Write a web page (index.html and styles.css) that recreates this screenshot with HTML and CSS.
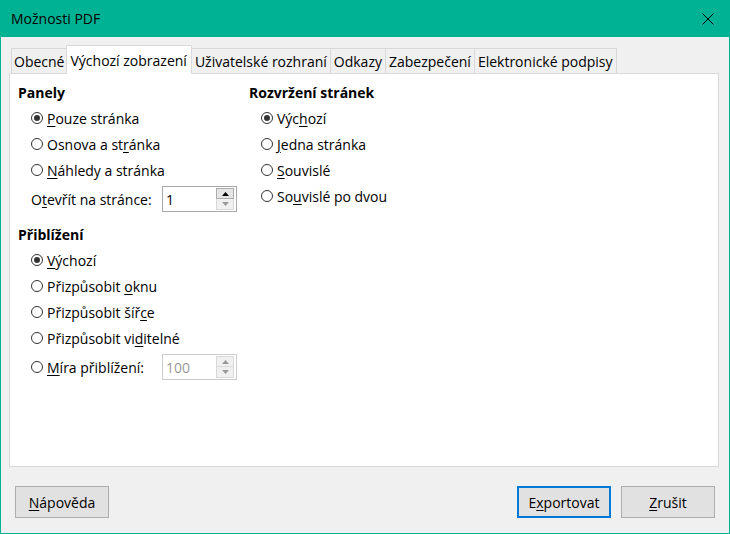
FILE: index.html
```html
<!DOCTYPE html>
<html lang="cs">
<head>
<meta charset="utf-8">
<title>Možnosti PDF</title>
<link rel="stylesheet" href="styles.css">
</head>
<body>
<div class="window">
  <div class="titlebar">
    <span class="title">Možnosti PDF</span>
    <svg class="close" width="12" height="12" viewBox="0 0 12 12"><path d="M0.5 0.5L11.5 11.5M11.5 0.5L0.5 11.5" stroke="#000" stroke-width="1" fill="none"/></svg>
  </div>
  <div class="body">
    <div class="tabs">
      <div class="tab">Obecné</div>
      <div class="tab active">Výchozí zobrazení</div>
      <div class="tab">Uživatelské rozhraní</div>
      <div class="tab">Odkazy</div>
      <div class="tab">Zabezpečení</div>
      <div class="tab last">Elektronické podpisy</div>
    </div>
    <div class="panel">
      <div class="col col-left">
        <div class="heading">Panely</div>
        <div class="radio-row"><span class="radio checked"></span><span><u>P</u>ouze stránka</span></div>
        <div class="radio-row"><span class="radio"></span><span>Osnova a st<u>r</u>ánka</span></div>
        <div class="radio-row"><span class="radio"></span><span><u>N</u>áhledy a stránka</span></div>
        <div class="spin-row">
          <span class="spin-label">O<u>t</u>evřít na stránce:</span>
          <div class="spinbox">
            <span class="spin-value">1</span>
            <div class="spin-buttons">
              <div class="spin-btn up"><svg width="7" height="4" viewBox="0 0 7 4"><path d="M0 4L3.5 0L7 4Z" fill="#000"/></svg></div>
              <div class="spin-btn down dim"><svg width="7" height="4" viewBox="0 0 7 4"><path d="M0 0L3.5 4L7 0Z" fill="#999"/></svg></div>
            </div>
          </div>
        </div>
        <div class="heading heading-gap">Přiblížení</div>
        <div class="radio-row"><span class="radio checked"></span><span><u>V</u>ýchozí</span></div>
        <div class="radio-row"><span class="radio"></span><span>Přizpůsobit <u>o</u>knu</span></div>
        <div class="radio-row"><span class="radio"></span><span>Přizpůsobit šíř<u>c</u>e</span></div>
        <div class="radio-row"><span class="radio"></span><span>Přizpůsobit vi<u>d</u>itelné</span></div>
        <div class="spin-row">
          <span class="spin-label radio-label"><span class="radio"></span><span><u>M</u>íra přiblížení:</span></span>
          <div class="spinbox disabled">
            <span class="spin-value">100</span>
            <div class="spin-buttons">
              <div class="spin-btn up dim"><svg width="7" height="4" viewBox="0 0 7 4"><path d="M0 4L3.5 0L7 4Z" fill="#999"/></svg></div>
              <div class="spin-btn down dim"><svg width="7" height="4" viewBox="0 0 7 4"><path d="M0 0L3.5 4L7 0Z" fill="#999"/></svg></div>
            </div>
          </div>
        </div>
      </div>
      <div class="col col-right">
        <div class="heading">Rozvržení stránek</div>
        <div class="radio-row"><span class="radio checked"></span><span>Výc<u>h</u>ozí</span></div>
        <div class="radio-row"><span class="radio"></span><span><u>J</u>edna stránka</span></div>
        <div class="radio-row"><span class="radio"></span><span><u>S</u>ouvislé</span></div>
        <div class="radio-row"><span class="radio"></span><span>So<u>u</u>vislé po dvou</span></div>
      </div>
    </div>
    <div class="buttons">
      <button class="btn"><u>N</u>ápověda</button>
      <div class="spacer"></div>
      <button class="btn default">E<u>x</u>portovat</button>
      <button class="btn"><u>Z</u>rušit</button>
    </div>
  </div>
</div>
</body>
</html>
```
FILE: styles.css
```css
html, body {
  margin: 0;
  padding: 0;
}
body {
  width: 730px;
  height: 534px;
  overflow: hidden;
  font-family: "Open Sans", "Noto Sans", sans-serif;
  font-size: 14px;
  color: #000;
  background: #f0f0f0;
}
u {
  text-decoration: underline;
  text-underline-offset: 2px;
}
.window {
  width: 730px;
  height: 534px;
  display: flex;
  flex-direction: column;
}
.titlebar {
  height: 37px;
  flex: none;
  background: #00b294;
  display: flex;
  align-items: center;
  padding-left: 11px;
}
.title {
  font-size: 14px;
  line-height: 20px;
  margin-top: 1px;
}
.close {
  margin-left: auto;
  margin-right: 16px;
  margin-top: 1px;
}
.body {
  flex: 1;
  border: 1px solid #00b294;
  border-top: 0;
  padding: 8px 10px 15px 8px;
  display: flex;
  flex-direction: column;
}
.tabs {
  height: 28px;
  display: flex;
  align-items: flex-end;
  padding-left: 2px;
  position: relative;
  z-index: 1;
}
.tab {
  height: 25px;
  box-sizing: border-box;
  border: 1px solid #d9d9d9;
  border-right: 0;
  border-bottom: 0;
  padding: 0 3px 0 3px;
  line-height: 25px;
  background: #f0f0f0;
  white-space: nowrap;
}
.tab:first-child {
  padding: 0 2px 0 2px;
}
.tab.last {
  border-right: 1px solid #d9d9d9;
}
.tab.active {
  height: 29px;
  margin-bottom: -1px;
  background: #fff;
  border-right: 1px solid #d9d9d9;
  line-height: 30px;
  padding: 0 4px 0 3px;
}
.tab.active + .tab {
  border-left: 0;
}
.panel {
  height: 394px;
  box-sizing: border-box;
  background: #fff;
  border: 1px solid #d9d9d9;
  padding: 9px 0 0 8px;
  display: flex;
}
.col-left {
  width: 231px;
}
.heading {
  height: 20px;
  line-height: 20px;
  font-weight: bold;
  margin-bottom: 2px;
}
.heading-gap {
  margin-top: 13px;
}
.radio-row {
  height: 26px;
  display: flex;
  align-items: center;
  padding-left: 13px;
  white-space: nowrap;
}
.col-right .radio-row {
  padding-left: 12px;
}
.radio {
  width: 12px;
  height: 12px;
  box-sizing: border-box;
  border: 1px solid #333;
  border-radius: 50%;
  margin-right: 4px;
  flex: none;
  display: flex;
  align-items: center;
  justify-content: center;
  background: #fff;
}
.radio.checked::after {
  content: "";
  width: 6px;
  height: 6px;
  border-radius: 50%;
  background: #333;
}
.spin-row {
  height: 26px;
  margin-top: 3px;
  display: flex;
  align-items: center;
  padding-left: 13px;
  white-space: nowrap;
}
.spin-label {
  width: 131px;
  flex: none;
}
.radio-label {
  display: flex;
  align-items: center;
}
.spinbox {
  width: 75px;
  height: 26px;
  box-sizing: border-box;
  border: 1px solid #a8a8a8;
  background: #fff;
  display: flex;
  align-items: center;
  padding: 0 2px 0 3px;
}
.spinbox.disabled {
  border-color: #cccccc;
  color: #9a9a9a;
}
.spin-value {
  flex: 1;
}
.spin-buttons {
  width: 18px;
  height: 22px;
  display: flex;
  flex-direction: column;
}
.spin-btn {
  height: 11px;
  box-sizing: border-box;
  border: 1px solid #acacac;
  background: #e5e5e5;
  display: flex;
  align-items: center;
  justify-content: center;
}
.spin-btn.dim {
  border-color: #d9d9d9;
  background: #f0f0f0;
}
.spin-btn.down {
  border-top: 0;
}
.buttons {
  margin-top: 19px;
  height: 32px;
  display: flex;
  padding-left: 6px;
  padding-right: 4px;
}
.spacer {
  flex: 1;
}
.btn {
  width: 94px;
  height: 32px;
  box-sizing: border-box;
  border: 1px solid #adadad;
  background: #e1e1e1;
  font-family: inherit;
  font-size: 14px;
  color: #000;
  padding: 0;
  margin: 0;
}
.btn.default {
  border: 2px solid #0078d7;
  margin-right: 10px;
}
```
